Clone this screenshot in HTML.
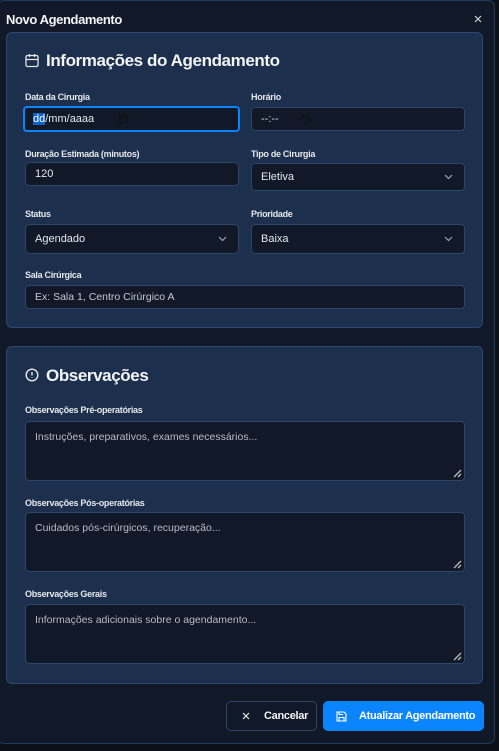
<!DOCTYPE html>
<html><head><meta charset="utf-8"><style>
*{box-sizing:border-box;margin:0;padding:0}
body{width:499px;height:751px;background:#0b0f17;font-family:"Liberation Sans",sans-serif;color:#e5e7eb;position:relative;overflow:hidden}
.modal{position:absolute;left:-2px;top:0;width:497px;height:744px;background:#111827;border:1px solid #1f3a5f;border-radius:6px}
.abs{position:absolute;white-space:nowrap}
.card{position:absolute;left:6px;width:477px;background:#1c2f4c;border:1px solid #2a4870;border-radius:6px}
.lbl{position:absolute;font-size:9px;font-weight:bold;color:#e5e7eb;letter-spacing:-0.3px;white-space:nowrap}
.in{position:absolute;background:#111827;border:1px solid #2d4668;border-radius:4px;font-size:11px;color:#e5e7eb;padding-left:9px;display:flex;align-items:center;white-space:nowrap}
.chev{position:absolute;right:11px;top:50%;margin-top:-3px}
.ta{position:absolute;background:#111827;border:1px solid #2d4668;border-radius:4px;font-size:10.5px;color:#b6bcc6;padding:9px 0 0 9px;white-space:nowrap}
.grip{position:absolute;right:2px;bottom:2px}
h2{position:absolute;font-size:17px;font-weight:bold;color:#f3f4f6;letter-spacing:-0.4px;white-space:nowrap}
</style></head><body>
<div class="modal"></div>
<div class="abs" style="left:6px;top:12px;font-size:13px;font-weight:bold;color:#f3f4f6;letter-spacing:-0.4px">Novo Agendamento</div>
<svg class="abs" style="left:474px;top:15px" width="8" height="8" viewBox="0 0 8 8"><path d="M1 1L7 7M7 1L1 7" stroke="#d1d5db" stroke-width="1.2"/></svg>

<div class="card" style="top:32px;height:296px"></div>
<svg class="abs" style="left:25px;top:53px" width="14" height="15" viewBox="0 0 14 15" fill="none" stroke="#e5e7eb" stroke-width="1.3"><rect x="1" y="2.5" width="12" height="11" rx="1.5"/><path d="M1 6.5H13M4.5 1V4M9.5 1V4"/></svg>
<h2 style="left:46px;top:51px">Informações do Agendamento</h2>

<div class="lbl" style="left:25px;top:92px">Data da Cirurgia</div>
<div class="in" style="left:23px;top:106px;width:217px;height:26px;border:2px solid #0a84ff;padding-left:8px"><span style="background:#0a64c8;color:#fff">dd</span>/mm/aaaa
<svg style="margin-left:24px" width="10" height="10" viewBox="0 0 10 10" fill="none" stroke="#111" stroke-width="1.2"><rect x="1" y="1.5" width="8" height="7.5"/><path d="M1 3.5H9"/></svg></div>
<div class="lbl" style="left:251px;top:92px">Horário</div>
<div class="in" style="left:251px;top:107px;width:214px;height:24px;color:#d1d5db">--:--
<svg style="margin-left:22px" width="10" height="10" viewBox="0 0 10 10" fill="none" stroke="#111" stroke-width="1.2"><circle cx="5" cy="5" r="4"/><path d="M5 2.5V5L6.5 6"/></svg></div>

<div class="lbl" style="left:25px;top:149px">Duração Estimada (minutos)</div>
<div class="in" style="left:25px;top:162px;width:214px;height:24px">120</div>
<div class="lbl" style="left:251px;top:149px">Tipo de Cirurgia</div>
<div class="in" style="left:251px;top:163px;width:214px;height:28px">Eletiva<svg class="chev" width="9" height="6" viewBox="0 0 9 6"><path d="M1 1L4.5 4.5L8 1" stroke="#9ca3af" fill="none" stroke-width="1.2"/></svg></div>

<div class="lbl" style="left:25px;top:209px">Status</div>
<div class="in" style="left:25px;top:224px;width:214px;height:30px">Agendado<svg class="chev" width="9" height="6" viewBox="0 0 9 6"><path d="M1 1L4.5 4.5L8 1" stroke="#9ca3af" fill="none" stroke-width="1.2"/></svg></div>
<div class="lbl" style="left:251px;top:209px">Prioridade</div>
<div class="in" style="left:251px;top:224px;width:214px;height:30px">Baixa<svg class="chev" width="9" height="6" viewBox="0 0 9 6"><path d="M1 1L4.5 4.5L8 1" stroke="#9ca3af" fill="none" stroke-width="1.2"/></svg></div>

<div class="lbl" style="left:25px;top:270px">Sala Cirúrgica</div>
<div class="in" style="left:25px;top:285px;width:440px;height:24px;color:#c4c9d1;font-size:10.5px">Ex: Sala 1, Centro Cirúrgico A</div>

<div class="card" style="top:346px;height:338px"></div>
<svg class="abs" style="left:25px;top:368px" width="14" height="14" viewBox="0 0 14 14" fill="none" stroke="#e5e7eb" stroke-width="1.4"><circle cx="7" cy="7" r="5.8"/><path d="M7 4V7.5M7 9.5V10"/></svg>
<h2 style="left:46px;top:366px">Observações</h2>

<div class="lbl" style="left:25px;top:405px">Observações Pré-operatórias</div>
<div class="ta" style="left:25px;top:421px;width:440px;height:60px">Instruções, preparativos, exames necessários...<svg class="grip" width="9" height="9" viewBox="0 0 9 9"><path d="M1 8L8 1M5 8L8 5" stroke="#bbb" stroke-width="1.3"/></svg></div>
<div class="lbl" style="left:25px;top:498px">Observações Pós-operatórias</div>
<div class="ta" style="left:25px;top:512px;width:440px;height:60px">Cuidados pós-cirúrgicos, recuperação...<svg class="grip" width="9" height="9" viewBox="0 0 9 9"><path d="M1 8L8 1M5 8L8 5" stroke="#bbb" stroke-width="1.3"/></svg></div>
<div class="lbl" style="left:25px;top:589px">Observações Gerais</div>
<div class="ta" style="left:25px;top:604px;width:440px;height:60px">Informações adicionais sobre o agendamento...<svg class="grip" width="9" height="9" viewBox="0 0 9 9"><path d="M1 8L8 1M5 8L8 5" stroke="#bbb" stroke-width="1.3"/></svg></div>

<div class="abs" style="left:226px;top:701px;width:91px;height:30px;border:1px solid #2d4668;border-radius:5px;background:#111827;display:flex;align-items:center;font-size:11px;font-weight:bold;color:#f3f4f6;letter-spacing:-0.3px">
<svg style="margin-left:15px;margin-right:14px" width="8" height="8" viewBox="0 0 8 8"><path d="M1 1L7 7M7 1L1 7" stroke="#e5e7eb" stroke-width="1.2"/></svg>Cancelar</div>
<div class="abs" style="left:323px;top:701px;width:161px;height:30px;border-radius:5px;background:#0a84ff;display:flex;align-items:center;font-size:11px;font-weight:bold;color:#fff;letter-spacing:-0.3px">
<svg style="margin-left:13px;margin-right:12px" width="11" height="11" viewBox="0 0 11 11" fill="none" stroke="#fff" stroke-width="1.1"><path d="M1 1H8L10 3V10H1Z"/><path d="M3 10V6.5H8V10M3 1V3.5H7"/></svg>Atualizar Agendamento</div>
</body></html>
